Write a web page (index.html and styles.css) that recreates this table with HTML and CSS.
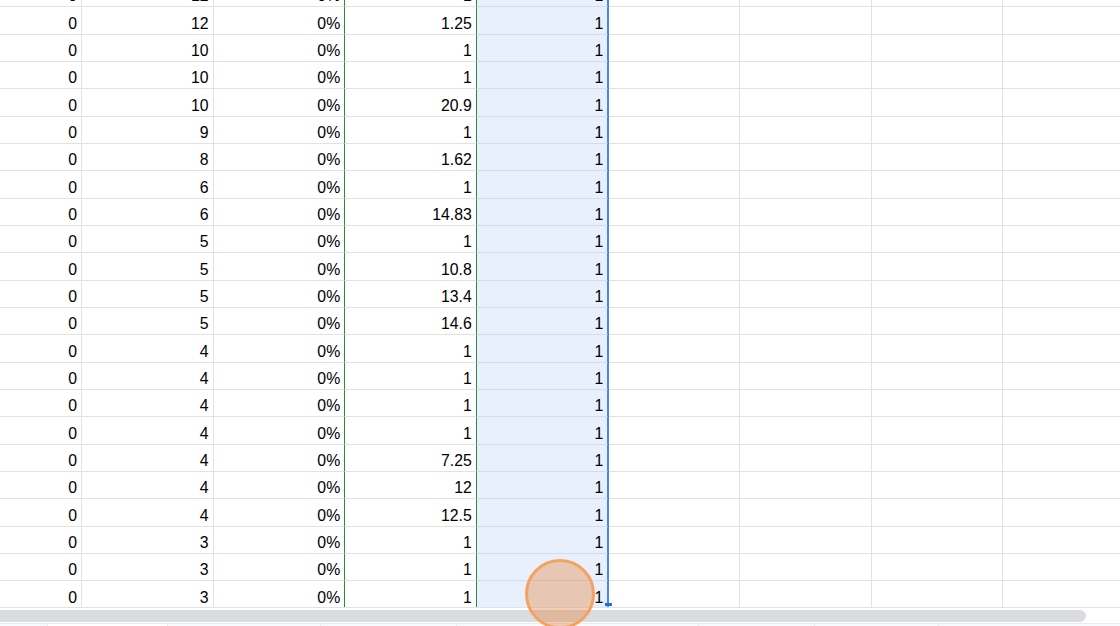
FILE: index.html
```html
<!DOCTYPE html>
<html>
<head>
<meta charset="utf-8">
<link rel="stylesheet" href="styles.css">
</head>
<body>
<div class="page">
  <div class="viewport">
    <div class="grid" id="grid"></div>
  </div>
  <div class="hscroll">
    <div class="thumb"></div>
  </div>
  <div class="tabs">
    <div class="tab t1"></div>
    <div class="tab t2"></div>
    <div class="tab t3"></div>
    <div class="tab t4"></div>
    <div class="tab t5"></div>
    <div class="tab t6"></div>
    <div class="tab t7"></div>
  </div>
  <div class="fill-handle"></div>
  <div class="click-dot"></div>
</div>
<script src="script.js"></script>
</body>
</html>
```

FILE: script.js
```js
var rows = [
  ["0","12","0%","1","1"],
  ["0","12","0%","1.25","1"],
  ["0","10","0%","1","1"],
  ["0","10","0%","1","1"],
  ["0","10","0%","20.9","1"],
  ["0","9","0%","1","1"],
  ["0","8","0%","1.62","1"],
  ["0","6","0%","1","1"],
  ["0","6","0%","14.83","1"],
  ["0","5","0%","1","1"],
  ["0","5","0%","10.8","1"],
  ["0","5","0%","13.4","1"],
  ["0","5","0%","14.6","1"],
  ["0","4","0%","1","1"],
  ["0","4","0%","1","1"],
  ["0","4","0%","1","1"],
  ["0","4","0%","1","1"],
  ["0","4","0%","7.25","1"],
  ["0","4","0%","12","1"],
  ["0","4","0%","12.5","1"],
  ["0","3","0%","1","1"],
  ["0","3","0%","1","1"],
  ["0","3","0%","1","1"],
  ["","","","",""]
];
var grid = document.getElementById("grid");
rows.forEach(function (r) {
  for (var c = 0; c < 9; c++) {
    var d = document.createElement("div");
    d.className = "cell c" + (c + 1);
    d.textContent = c < 5 ? r[c] : "";
    grid.appendChild(d);
  }
});
```

FILE: styles.css
```css
html, body {
  margin: 0;
  padding: 0;
  background: #ffffff;
}

.page {
  position: relative;
  width: 1120px;
  height: 626px;
  overflow: hidden;
  font-family: "Liberation Sans", Arial, sans-serif;
  font-size: 15.8px;
  color: #000000;
}

.viewport {
  height: 607px;
  overflow: hidden;
}

.grid {
  display: grid;
  grid-template-columns: repeat(9, 131.6px);
  grid-auto-rows: 27.33px;
  margin-top: -20px;
  margin-left: -49.6px;
  width: 1184.4px;
}

.cell {
  box-sizing: border-box;
  border-right: 1px solid #e2e2e3;
  border-bottom: 1px solid #e2e2e3;
  display: flex;
  align-items: flex-end;
  justify-content: flex-end;
  padding: 0 4px 1px 0;
  line-height: 18px;
  white-space: nowrap;
}

.c3, .c4 {
  border-right-color: #2f8a3c;
}

.c5 {
  background: #e8f0fe;
  border-bottom-color: #d4dbea;
  border-right-color: #4a86e8;
  box-shadow: 1px 0 0 #4a86e8;
  position: relative;
  z-index: 1;
}

.hscroll {
  box-sizing: border-box;
  height: 16px;
  border-top: 1px solid #e2e2e3;
  padding-top: 2px;
  background: #ffffff;
}

.thumb {
  height: 12px;
  width: 1096px;
  margin-left: -10px;
  border-radius: 6px;
  background: #dadce0;
}

.tabs {
  display: flex;
  height: 3px;
  border-top: 1px solid #e8eaed;
  background: #f8f9fa;
}

.tab {
  border-right: 1px solid #e8eaed;
}

.t1 { width: 47px; }
.t2 { width: 119px; background: #ffffff; }
.t3 { width: 152px; }
.t4 { width: 135px; }
.t5 { width: 241px; }
.t6 { width: 115px; }
.t7 { width: 123px; }

.fill-handle {
  position: absolute;
  left: 605px;
  top: 603px;
  width: 7px;
  height: 3px;
  background: #1a73e8;
  z-index: 3;
}

.click-dot {
  position: absolute;
  left: 525px;
  top: 559px;
  width: 70px;
  height: 70px;
  box-sizing: border-box;
  border-radius: 50%;
  border: 3px solid #f5a25e;
  background: rgba(230, 128, 60, 0.38);
  z-index: 4;
}
```
